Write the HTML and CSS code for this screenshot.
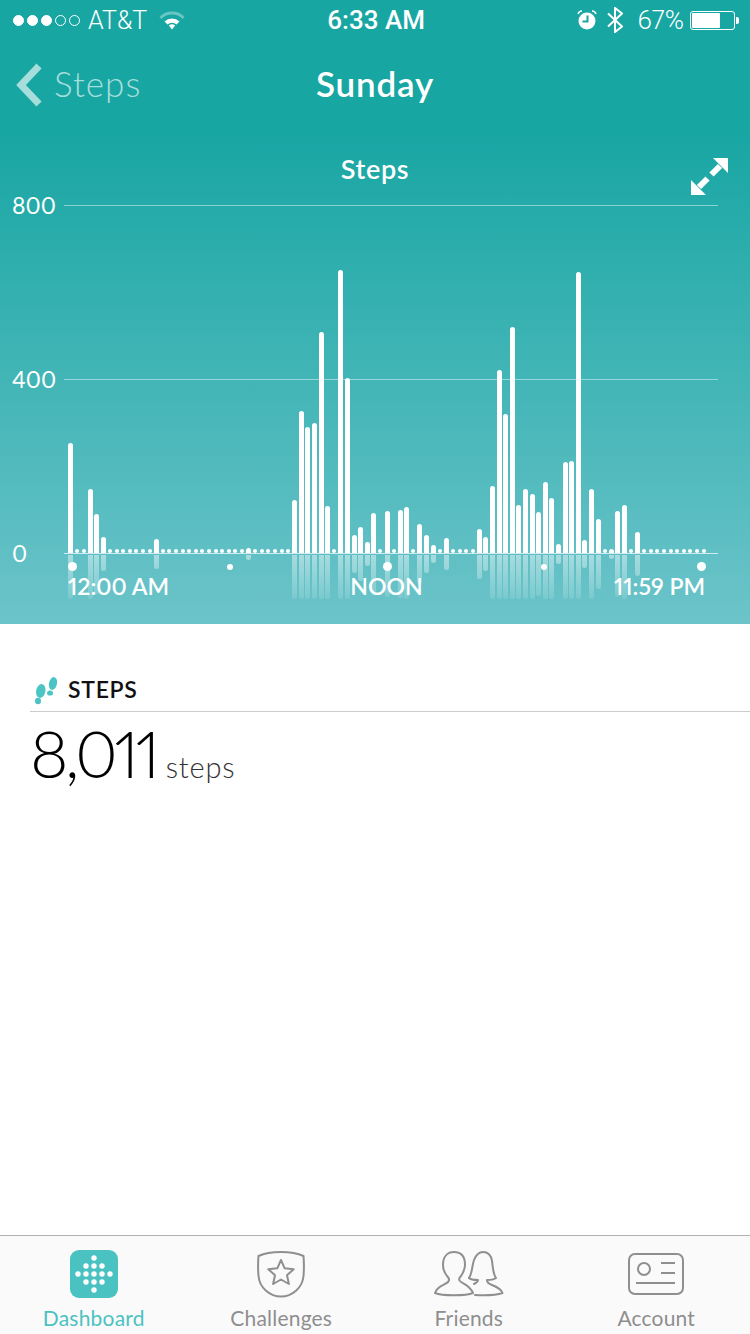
FILE: index.html
```html
<!DOCTYPE html>
<html lang="en">
<head>
    <meta charset="UTF-8">
    <title>Steps - Sunday</title>
    <meta name="viewport" content="width=device-width, initial-scale=1">
    <link rel="stylesheet" href="styles.css">
    <script src="chart.js"></script>
</head>
<body>
    <div id="container">
        <div class="hero">
            <div class="statusbar">
                <div class="status-left">
                    <span class="signal"><i class="on"></i><i class="on"></i><i class="on"></i><i></i><i></i></span>
                    <span class="carrier">AT&amp;T</span>
                    <svg class="wifi" width="26" height="19" viewBox="0 0 26 19">
                        <path d="M1.5 7 A16 16 0 0 1 24.5 7" fill="none" stroke="#fff" stroke-opacity=".35" stroke-width="3"/>
                        <path d="M5.5 10.5 A11 11 0 0 1 20.500 10.500 L17.500 13.500 A7 7 0 0 0 8.500 13.500 Z" fill="#fff"/>
                        <path d="M9.800 14.500 A5 5 0 0 1 16.200 14.500 L13 18.500 Z" fill="#fff"/>
                    </svg>
                </div>
                <div class="status-time">6:33 AM</div>
                <div class="status-right">
                    <svg width="20" height="20" viewBox="0 0 20 20">
                        <circle cx="10" cy="11" r="8.500" fill="#fff"/>
                        <path d="M10.500 5.500 V11.500 H5.500" fill="none" stroke="#18a6a3" stroke-width="2"/>
                        <path d="M1 4 Q2 1 5 1 M19 4 Q18 1 15 1" fill="none" stroke="#fff" stroke-width="1.500"/>
                    </svg>
                    <svg class="bluetooth" width="16" height="26" viewBox="0 0 16 26">
                        <path d="M1 6.500 L15 19.500 L8 25 V1 L15 6.500 L1 19.500" fill="none" stroke="#fff" stroke-width="2"/>
                    </svg>
                    <span class="battery-pct">67%</span>
                    <span class="battery"><span class="battery-fill"></span></span>
                    <span class="battery-tip"></span>
                </div>
            </div>

            <div class="navbar">
                <div class="nav-back">
                    <svg width="26" height="44" viewBox="0 0 26 44">
                        <path d="M23 3 L5 22 L23 41" fill="none" stroke="#a6dedc" stroke-width="7"/>
                    </svg>
                    <span>Steps</span>
                </div>
                <h1>Sunday</h1>
            </div>

            <div class="chart-head">
                <h2>Steps</h2>
                <svg class="expand" width="37" height="37" viewBox="0 0 37 37">
                    <path d="M37 0 V15 L22 0 Z M0 37 V22 L15 37 Z" fill="#fff"/>
                    <path d="M29 8 L20.500 16.500 M8 29 L16.500 20.500" stroke="#fff" stroke-width="6"/>
                </svg>
            </div>

            <div class="plot">
                <div class="grid-row"><span>800</span><i></i></div>
                <div class="grid-row"><span>400</span><i></i></div>
                <div class="grid-row last"><span>0</span><i></i></div>

                <div class="bars" id="bars"></div>

                <div class="ticks">
                    <i class="big"></i><i></i><i class="big"></i><i></i><i class="big"></i>
                </div>
                <div class="time-labels">
                    <span>12:00 AM</span><span>NOON</span><span class="end">11:59 PM</span>
                </div>
            </div>
        </div>

        <div class="content">
            <div class="stat-head">
                <svg width="24" height="28" viewBox="0 0 24 28">
                    <g fill="#4cc4c6">
                        <ellipse cx="5.800" cy="14" rx="4.600" ry="7" transform="rotate(12 5.800 14)"/>
                        <ellipse cx="3" cy="24" rx="3" ry="3.200"/>
                        <ellipse cx="18" cy="6.500" rx="4" ry="6.500" transform="rotate(12 18 6.500)"/>
                        <ellipse cx="15" cy="16" rx="3" ry="2.600"/>
                    </g>
                </svg>
                <span>STEPS</span>
            </div>
            <div class="stat-value"><b>8,011</b> <span>steps</span></div>
        </div>

        <div class="tabbar">
            <div class="tab active">
                <svg width="48" height="48" viewBox="0 0 48 48">
                    <rect width="48" height="48" rx="9" fill="#4bc2c2"/>
                    <g fill="#fff">
                        <circle cx="24" cy="8" r="2.700"/>
                        <circle cx="16" cy="16" r="2.700"/><circle cx="24" cy="16" r="2.700"/><circle cx="32" cy="16" r="2.700"/>
                        <circle cx="8" cy="24" r="2.700"/><circle cx="16" cy="24" r="2.700"/><circle cx="24" cy="24" r="2.700"/><circle cx="32" cy="24" r="2.700"/><circle cx="40" cy="24" r="2.700"/>
                        <circle cx="16" cy="32" r="2.700"/><circle cx="24" cy="32" r="2.700"/><circle cx="32" cy="32" r="2.700"/>
                        <circle cx="24" cy="40" r="2.700"/>
                    </g>
                </svg>
                <span>Dashboard</span>
            </div>
            <div class="tab">
                <svg width="48" height="48" viewBox="0 0 48 48">
                    <g fill="none" stroke="#8f8f8f" stroke-width="2" stroke-linejoin="round">
                        <path d="M1.500 6 C8 3 16 2 24 2 C32 2 40 3 46.500 6 C47 12 47 20 46.500 26 C45.500 38 35 46.500 24 46.500 C13 46.500 2.500 38 1.500 26 C1 20 1 12 1.500 6 Z"/>
                        <path d="M24 10 L27.700 18.300 L36.700 19.200 L30 25.200 L31.900 34 L24 29.500 L16.100 34 L18 25.200 L11.300 19.200 L20.300 18.300 Z"/>
                    </g>
                </svg>
                <span>Challenges</span>
            </div>
            <div class="tab">
                <svg width="70" height="48" viewBox="0 0 70 48">
                    <g fill="none" stroke="#8f8f8f" stroke-width="2" stroke-linejoin="round" stroke-linecap="round">
                        <path d="M1 43 C3 36 11 35 14 32 C16 30 15 28 13 26 C10 22 9 19 9 15 C9 6 14 2 20 2 C27 2 31 6 31 15 C31 19 29 23 27 26 C25 28 24 30 27 32 C31 34.500 36 36 39 43 C32 46 8 46 1 43 Z"/>
                        <path d="M35 28 C38 24 38 16 40 10 C42 5 45 2 49 2 C54 2 57 5 58 11 C59 18 59 24 62 28 C59 30 56 30 53 30 C53 33 55 34 58 35 C62 36.500 67 39 68.500 43 C60 46 50 45.500 41 45"/>
                        <path d="M35 28 C37 30 41 30 44 30 C44 32 42 33 40 34"/>
                    </g>
                </svg>
                <span>Friends</span>
            </div>
            <div class="tab">
                <svg width="56" height="48" viewBox="0 0 56 48">
                    <g fill="none" stroke="#8f8f8f" stroke-width="2">
                        <rect x="1" y="4" width="54" height="40" rx="6"/>
                        <circle cx="16" cy="19" r="6"/>
                        <path d="M33 13 H47 M33 23 H47 M8 33 H47"/>
                    </g>
                </svg>
                <span>Account</span>
            </div>
        </div>
    </div>
</body>
</html>
```
FILE: styles.css
```css
body, html {
    margin: 0;
    padding: 0;
    font: 22px 'Lato', 'Open Sans', sans-serif;
    font-variant-numeric: proportional-nums;
    height: 100%;
    overflow: hidden;
}

#container {
    width: 750px;
    height: 1334px;
    display: flex;
    flex-direction: column;
    background-color: #fff;
}

.hero {
    height: 624px;
    flex: none;
    color: #fff;
    background: linear-gradient(#18a6a3 0, #18a6a3 130px, #6cc4ca 100%);
}

/* status bar */
.statusbar {
    height: 40px;
    padding: 0 11px 0 13px;
    display: grid;
    grid-template-columns: 1fr auto 1fr;
    align-items: center;
    font-family: 'Roboto', sans-serif;
    font-weight: 300;
    font-size: 25px;
}

.status-left {
    display: flex;
    align-items: center;
}

.signal {
    display: flex;
    gap: 3px;
}

.signal i {
    width: 9px;
    height: 9px;
    border: 1px solid #fff;
    border-radius: 50%;
}

.signal i.on {
    background-color: #fff;
}

.carrier {
    margin-left: 8px;
}

.wifi {
    margin-left: 12px;
}

.status-time {
    font-size: 26px;
    font-weight: 500;
}

.status-right {
    display: flex;
    align-items: center;
    justify-content: flex-end;
}

.bluetooth {
    margin-left: 10px;
}

.battery-pct {
    margin-left: 14px;
    font-size: 26px;
}

.battery {
    width: 45px;
    height: 19px;
    box-sizing: border-box;
    margin-left: 6px;
    padding: 1px;
    border: 1px solid #fff;
    border-radius: 3px;
}

.battery-fill {
    display: block;
    width: 28px;
    height: 100%;
    background-color: #fff;
    border-radius: 1px;
}

.battery-tip {
    width: 3px;
    height: 7px;
    margin-left: 1px;
    background-color: #fff;
    border-radius: 0 2px 2px 0;
}

/* nav */
.navbar {
    height: 90px;
    display: grid;
    grid-template-columns: 1fr auto 1fr;
    align-items: center;
}

.navbar h1 {
    margin: 0 0 4px;
    font-size: 35px;
    font-weight: 600;
    letter-spacing: .8px;
}

.nav-back {
    display: flex;
    align-items: center;
    padding-left: 16px;
    gap: 12px;
    font-size: 35px;
    font-weight: 300;
    letter-spacing: 1px;
    color: #a6dedc;
}

.nav-back span {
    margin-bottom: 4px;
}

/* chart */
.chart-head {
    height: 75px;
    box-sizing: border-box;
    padding-top: 22px;
    display: grid;
    grid-template-columns: 1fr auto 1fr;
    align-items: start;
}

.chart-head h2 {
    grid-column: 2;
    margin: 0;
    font-size: 27px;
    line-height: 34px;
    font-weight: 600;
    letter-spacing: .6px;
}

.expand {
    justify-self: end;
    margin: 6px 22px 0 0;
}

.plot {
    position: relative;
    height: 419px;
}

.grid-row {
    display: flex;
    height: 174px;
    padding-left: 12px;
}

.grid-row.last {
    height: 71px;
}

.grid-row span {
    width: 52px;
    height: 26px;
    margin-top: -13px;
    line-height: 26px;
    font-size: 23px;
}

.grid-row i {
    width: 654px;
    height: 1px;
    background-color: rgba(255, 255, 255, .45);
}

.grid-row.last i {
    background-color: rgba(255, 255, 255, .7);
}

.bars {
    position: absolute;
    top: 0;
    left: 68px;
    display: flex;
    gap: 1.6px;
}

.col {
    width: 5px;
}

.col-top {
    height: 348px;
    display: flex;
    flex-direction: column;
    justify-content: flex-end;
}

.bar {
    background-color: #fff;
    border-radius: 2.5px 2.5px 0 0;
}

.dot {
    width: 4px;
    height: 4px;
    margin: 0 0 0 .5px;
    background-color: #fff;
    border-radius: 50%;
}

.mirror {
    margin-top: 2px;
    max-height: 44px;
    border-radius: 0 0 2.5px 2.5px;
    background: linear-gradient(rgba(255, 255, 255, .45), rgba(255, 255, 255, .12)) no-repeat;
    background-size: 100% 44px;
}

.ticks {
    position: absolute;
    top: 357px;
    left: 68px;
    width: 638px;
    height: 9px;
    display: flex;
    justify-content: space-between;
    align-items: center;
}

.ticks i {
    width: 6px;
    height: 6px;
    margin: 0 1.500px;
    background-color: #fff;
    border-radius: 50%;
}

.ticks i.big {
    width: 9px;
    height: 9px;
    margin: 0;
}

.time-labels {
    position: absolute;
    top: 367px;
    left: 68px;
    width: 637px;
    display: grid;
    grid-template-columns: 1fr auto 1fr;
    font-size: 23px;
    line-height: 28px;
    font-weight: 600;
}

.time-labels .end {
    justify-self: end;
}

/* steps total */
.content {
    flex: 1;
    padding: 47px 0 0 30px;
}

.stat-head {
    height: 40px;
    display: flex;
    align-items: center;
    gap: 9px;
    padding-left: 5px;
    border-bottom: 1px solid #ccc;
    font-size: 23px;
    font-weight: 600;
    letter-spacing: .7px;
    color: #111;
}

.stat-head span {
    margin-bottom: 4px;
}

.stat-value {
    line-height: 82px;
    font-size: 29px;
    font-weight: 300;
    letter-spacing: .8px;
    color: #333;
}

.stat-value b {
    font-size: 66px;
    font-weight: 300;
    letter-spacing: -3.5px;
    color: #000;
}

/* tabs */
.tabbar {
    height: 99px;
    box-sizing: border-box;
    flex: none;
    display: flex;
    border-top: 1px solid #b2b2b2;
    background-color: #fafafa;
}

.tab {
    flex: 1;
    display: flex;
    flex-direction: column;
    align-items: center;
    padding-top: 14px;
    font-size: 21px;
    letter-spacing: .2px;
    color: #8e8e8e;
}

.tab span {
    margin-top: 7px;
    line-height: 26px;
}

.tab.active {
    color: #4bc2c2;
}
```
FILE: chart.js
```js
// px height of each 15 minute bar, 0 means just a dot
const heights = [
    110, 0, 0, 64, 39, 16, 0, 0, 0, 0, 0, 0, 0, 14, 0, 0, 0, 0, 0, 0, 0, 0, 0, 0, 0, 0, 0, 5,
    0, 0, 0, 0, 0, 0, 53, 142, 126, 130, 221, 47, 0, 283, 175, 18, 26, 11, 40, 0, 42, 0, 43, 46,
    0, 29, 18, 8, 0, 15, 0, 0, 0, 0, 24, 16, 67, 183, 139, 226, 48, 64, 59, 41, 71, 55, 9, 91,
    92, 281, 13, 64, 34, 0, 4, 42, 48, 0, 21, 0, 0, 0, 0, 0, 0, 0, 0, 0, 0
];

function init() {
    let bars = document.getElementById("bars");
    heights.forEach(h => {
        let col = document.createElement("div");
        col.className = "col";
        let top = document.createElement("div");
        top.className = "col-top";
        let bar = document.createElement("div");
        if (h > 0) {
            bar.className = "bar";
            bar.style.height = h + "px";
        } else {
            bar.className = "dot";
        }
        top.appendChild(bar);
        col.appendChild(top);
        if (h > 0) {
            let mirror = document.createElement("div");
            mirror.className = "mirror";
            mirror.style.height = h + "px";
            col.appendChild(mirror);
        }
        bars.appendChild(col);
    });
}
document.addEventListener("DOMContentLoaded", init);
```
